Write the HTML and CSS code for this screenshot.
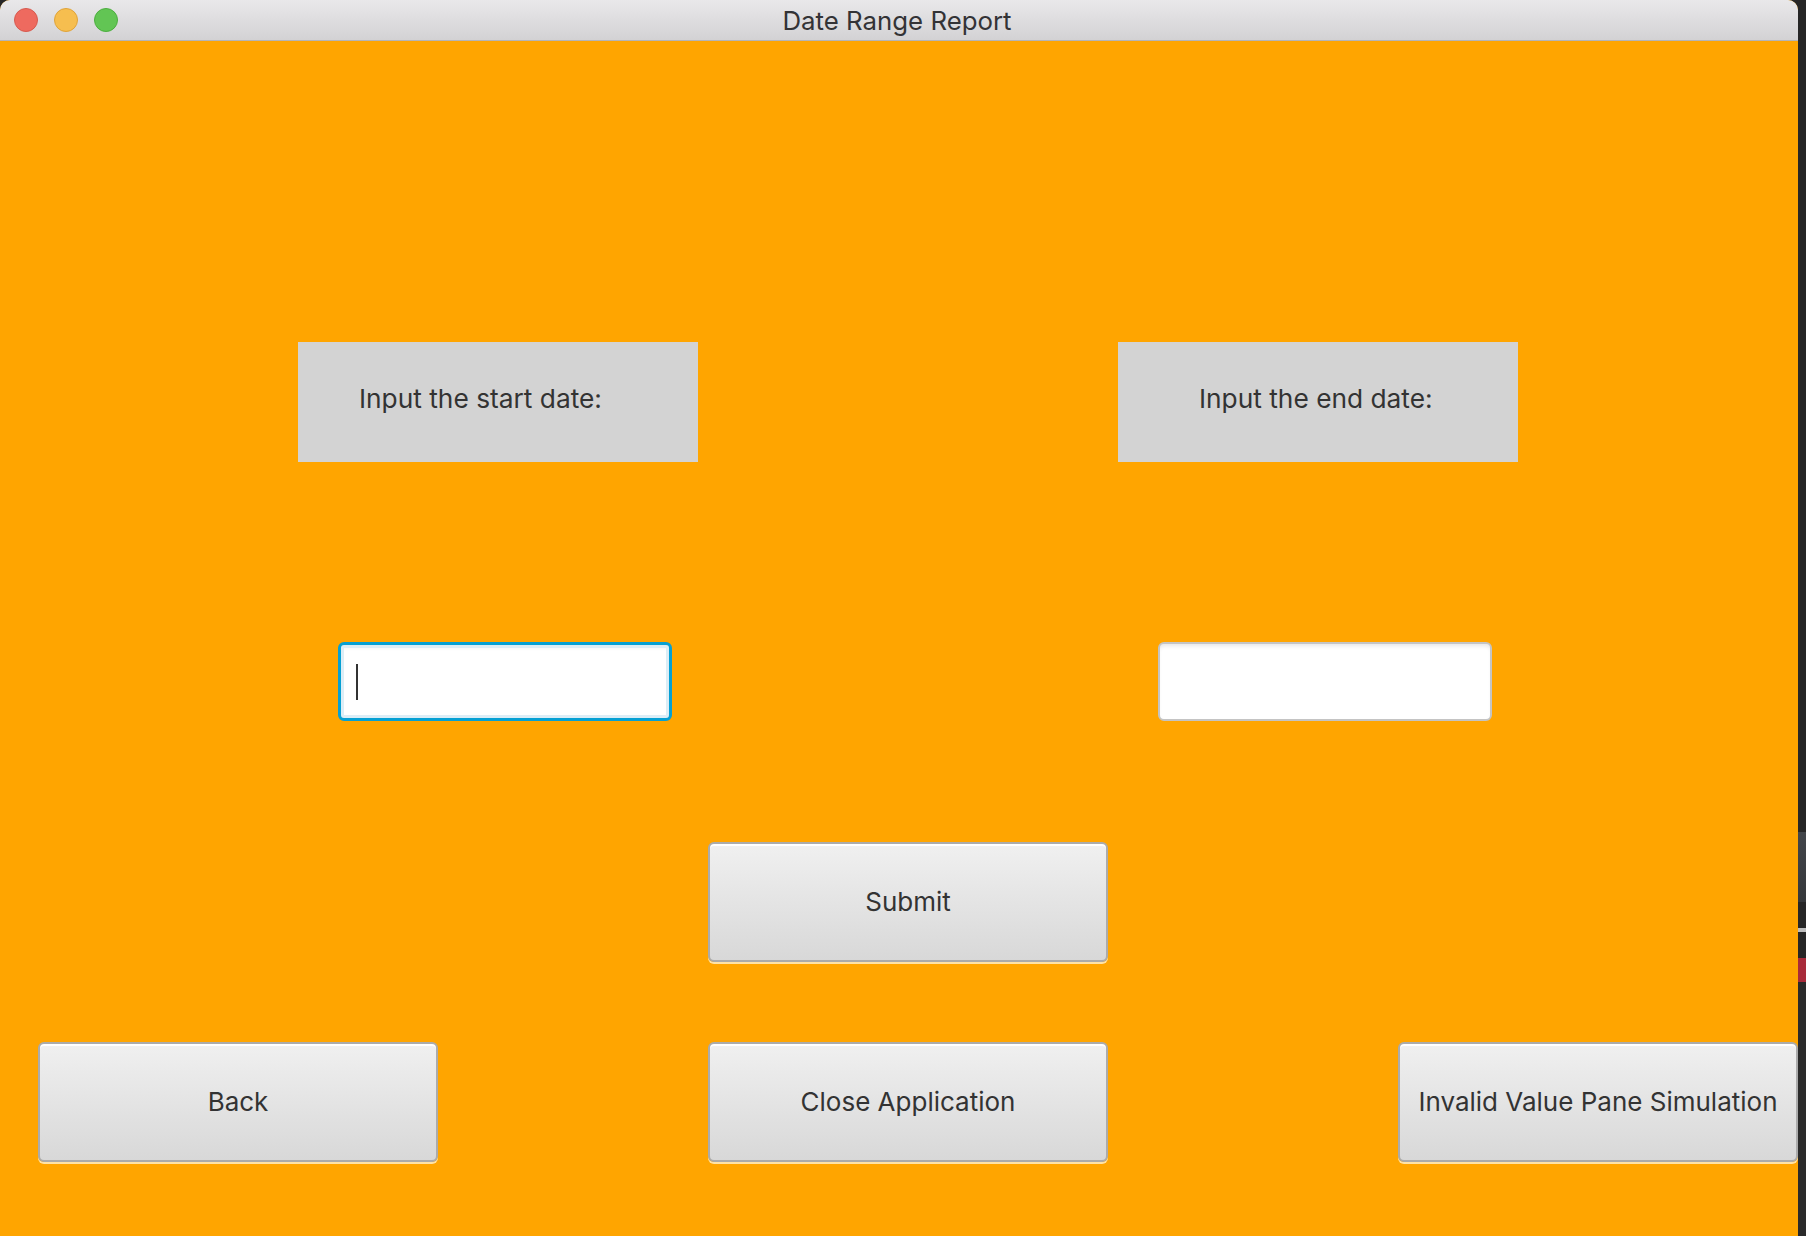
FILE: index.html
```html
<!DOCTYPE html>
<html>
<head>
<meta charset="utf-8">
<title>Date Range Report</title>
<link rel="stylesheet" href="styles.css">
</head>
<body>
<div class="desk">
  <div class="window">
    <div class="titlebar">
      <div class="lights">
        <span class="light red"></span>
        <span class="light yellow"></span>
        <span class="light green"></span>
      </div>
      <div class="title">Date Range Report</div>
    </div>
    <div class="content">
      <div class="row row-labels">
        <div class="label label-start">Input the start date:</div>
        <div class="label label-end">Input the end date:</div>
      </div>
      <div class="row row-fields">
        <div class="field field-focus"><span class="caret"></span></div>
        <div class="field field-end"></div>
      </div>
      <div class="row row-submit">
        <button class="btn btn-submit">Submit</button>
      </div>
      <div class="row row-bottom">
        <button class="btn btn-back">Back</button>
        <button class="btn btn-close">Close Application</button>
        <button class="btn btn-invalid">Invalid Value Pane Simulation</button>
      </div>
    </div>
  </div>
  <div class="strip">
    <div class="s-dark1"></div>
    <div class="s-gray"></div>
    <div class="s-dark2"></div>
    <div class="s-line"></div>
    <div class="s-dark3"></div>
    <div class="s-red"></div>
    <div class="s-dark4"></div>
  </div>
</div>
</body>
</html>
```
FILE: styles.css
```css
html, body {
  margin: 0;
  padding: 0;
  width: 1806px;
  height: 1236px;
  overflow: hidden;
  background: #262626;
  font-family: Inter, "Liberation Sans", sans-serif;
  color: #333333;
}

.desk {
  display: flex;
  width: 1806px;
  height: 1236px;
}

.window {
  width: 1798px;
  height: 1236px;
  display: flex;
  flex-direction: column;
  background: #ffa500;
  border-radius: 10px 10px 0 0;
  overflow: hidden;
}

.titlebar {
  height: 40px;
  flex: none;
  position: relative;
  background: linear-gradient(#e9e8ea, #d3d2d4);
  border-bottom: 1px solid #b5b4b6;
  display: flex;
  align-items: center;
  justify-content: center;
}

.lights {
  position: absolute;
  left: 14px;
  top: 8px;
  display: flex;
  gap: 16px;
}

.light {
  width: 22px;
  height: 22px;
  border-radius: 50%;
  display: block;
}
.red { background: #ee6a5f; border: 1px solid #d65a4f; }
.yellow { background: #f6be4f; border: 1px solid #dfa33a; }
.green { background: #62c554; border: 1px solid #4cae3f; }

.title {
  font-size: 25.8px;
  color: #333336;
  padding-right: 4px;
  padding-top: 1px;
}

.content {
  flex: 1;
  display: flex;
  flex-direction: column;
}

.row {
  display: flex;
  align-items: flex-start;
}

.row-labels { margin-top: 301px; }
.row-fields { margin-top: 180px; }
.row-submit { margin-top: 121px; }
.row-bottom { margin-top: 80px; }

.label {
  width: 400px;
  height: 120px;
  background: #d3d3d3;
  display: flex;
  align-items: center;
  box-sizing: border-box;
  font-size: 26.3px;
  padding-bottom: 8px;
  white-space: nowrap;
}
.label-start { margin-left: 298px; padding-left: 61px; }
.label-end { margin-left: 420px; padding-left: 81px; }

.field {
  width: 334px;
  height: 79px;
  box-sizing: border-box;
  background: #ffffff;
  border-radius: 6px;
  display: flex;
  align-items: center;
}
.field-focus {
  margin-left: 338px;
  border: 3px solid #06a0d3;
  box-shadow: inset 0 0 0 3px #dcedf6, inset 0 4px 3px rgba(0,0,0,0.04);
  padding-left: 15px;
}
.field-end {
  margin-left: 486px;
  border: 2px solid #c4c4c4;
  box-shadow: inset 0 4px 4px -2px rgba(0,0,0,0.10);
}

.caret {
  display: block;
  width: 2px;
  height: 36px;
  background: #333333;
}

.btn {
  width: 400px;
  height: 120px;
  box-sizing: border-box;
  border: 2px solid #ababab;
  border-radius: 6px;
  background: linear-gradient(#f0f0f0, #d8d8d8);
  box-shadow: inset 0 2px 0 #ffffff, 0 2px 0 #ffe2a6;
  font-family: Inter, "Liberation Sans", sans-serif;
  font-size: 26px;
  color: #333333;
  padding: 0 0 2px 0;
  white-space: nowrap;
  display: flex;
  align-items: center;
  justify-content: center;
}

.btn-submit { margin-left: 708px; }
.btn-back { margin-left: 38px; }
.btn-close { margin-left: 270px; }
.btn-invalid { margin-left: 290px; }

.strip {
  width: 8px;
  height: 1236px;
  display: flex;
  flex-direction: column;
  background: #262626;
}
.s-dark1 { height: 832px; }
.s-gray { height: 70px; background: linear-gradient(#42454a, #35373a); }
.s-dark2 { height: 26px; }
.s-line { height: 4px; background: #bdbdbd; }
.s-dark3 { height: 26px; }
.s-red { height: 24px; background: #a82a3a; }
.s-dark4 { flex: 1; background: #2a2a2a; }
```
